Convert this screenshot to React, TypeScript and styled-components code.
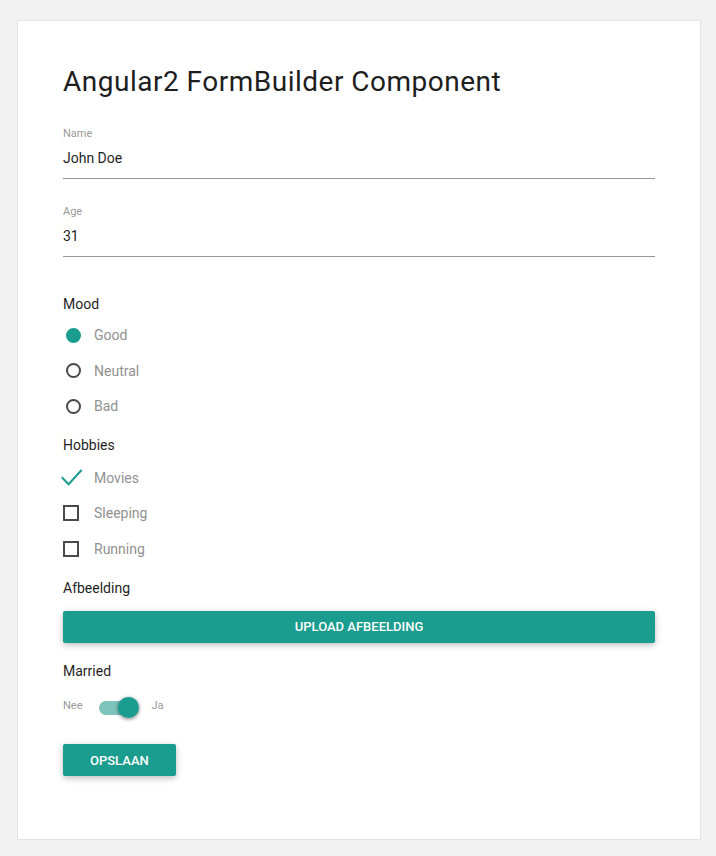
import React from "react";
import styled, { createGlobalStyle } from "styled-components";

const TEAL = "#1a9c8e";

const Global = createGlobalStyle`
  html, body { margin: 0; padding: 0; }
  body {
    background: #f2f2f2;
    font-family: Roboto, "Noto Sans", Arial, sans-serif;
    -webkit-font-smoothing: antialiased;
  }
  * { box-sizing: border-box; }
`;

const Page = styled.div`
  padding: 20px 15px 16px 17px;
`;

const Card = styled.div`
  background: #ffffff;
  border: 1px solid #e4e4e4;
  height: 820px;
  padding: 44px 45px 0 45px;
  display: flex;
  flex-direction: column;
`;

const Title = styled.h1`
  margin: 0;
  font-size: 28px;
  line-height: 34px;
  font-weight: 400;
  letter-spacing: 0.5px;
  color: #1e1e1e;
`;

const Field = styled.div<{ $mt: number }>`
  margin-top: ${(p) => p.$mt}px;
  border-bottom: 1px solid #979797;
  padding-bottom: 10px;
`;

const FieldLabel = styled.div`
  font-size: 11px;
  line-height: 14px;
  color: #9a9a9a;
`;

const FieldValue = styled.div`
  margin-top: 7px;
  font-size: 14px;
  line-height: 20px;
  color: #1f1f1f;
`;

const Section = styled.div<{ $mt: number }>`
  margin-top: ${(p) => p.$mt}px;
  display: flex;
  flex-direction: column;
`;

const SectionLabel = styled.div`
  font-size: 14px;
  line-height: 20px;
  color: #1f1f1f;
`;

const Options = styled.div<{ $mt: number }>`
  margin-top: ${(p) => p.$mt}px;
  display: flex;
  flex-direction: column;
`;

const Option = styled.div`
  height: 35.5px;
  display: flex;
  align-items: center;
`;

const IconSlot = styled.div`
  width: 31px;
  height: 20px;
  display: flex;
  align-items: center;
`;

const OptionText = styled.span`
  font-size: 14px;
  line-height: 20px;
  color: #919191;
`;

const Radio = styled.span<{ $checked?: boolean }>`
  width: 15px;
  height: 15px;
  margin-left: 2.5px;
  border-radius: 50%;
  border: 2px solid ${(p) => (p.$checked ? TEAL : "#4a4a4a")};
  background: ${(p) => (p.$checked ? TEAL : "transparent")};
`;

const Box = styled.span`
  width: 16px;
  height: 16px;
  border: 2px solid #4a4a4a;
`;

const CheckSvg = styled.svg`
  margin-left: -2px;
  width: 22px;
  height: 18px;
  overflow: visible;
`;

const RaisedButton = styled.button<{ $full?: boolean }>`
  height: 32px;
  border: none;
  border-radius: 2px;
  background: ${TEAL};
  color: #ffffff;
  font-family: Roboto, "Noto Sans", Arial, sans-serif;
  font-size: 13px;
  font-weight: 500;
  letter-spacing: 0;
  text-transform: uppercase;
  padding: 0 27px;
  width: ${(p) => (p.$full ? "100%" : "auto")};
  align-self: ${(p) => (p.$full ? "stretch" : "flex-start")};
  box-shadow: 0 2px 5px 0 rgba(0, 0, 0, 0.16), 0 2px 10px 0 rgba(0, 0, 0, 0.12);
  cursor: pointer;
`;

const SwitchRow = styled.div`
  margin-top: 16px;
  height: 22px;
  display: flex;
  align-items: center;
`;

const SwitchText = styled.span`
  font-size: 11px;
  line-height: 14px;
  padding-bottom: 5px;
  color: #999999;
`;

const Track = styled.span`
  position: relative;
  width: 36px;
  height: 14px;
  margin: 0 17px 0 16px;
  border-radius: 7px;
  background: #7ec4bc;
`;

const Thumb = styled.span`
  position: absolute;
  left: 19px;
  top: -4px;
  width: 21px;
  height: 21px;
  border-radius: 50%;
  background: ${TEAL};
  box-shadow: 0 1px 3px 1px rgba(0, 0, 0, 0.3);
`;

const moods = [
  { label: "Good", checked: true },
  { label: "Neutral", checked: false },
  { label: "Bad", checked: false },
];

const hobbies = [
  { label: "Movies", checked: true },
  { label: "Sleeping", checked: false },
  { label: "Running", checked: false },
];

export default function App() {
  return (
    <>
      <Global />
      <Page>
        <Card>
          <Title>Angular2 FormBuilder Component</Title>

          <Field $mt={28}>
            <FieldLabel>Name</FieldLabel>
            <FieldValue>John Doe</FieldValue>
          </Field>
          <Field $mt={26}>
            <FieldLabel>Age</FieldLabel>
            <FieldValue>31</FieldValue>
          </Field>

          <Section $mt={36.5}>
            <SectionLabel>Mood</SectionLabel>
            <Options $mt={4}>
              {moods.map((m) => (
                <Option key={m.label}>
                  <IconSlot>
                    <Radio $checked={m.checked} />
                  </IconSlot>
                  <OptionText>{m.label}</OptionText>
                </Option>
              ))}
            </Options>
          </Section>

          <Section $mt={11.2}>
            <SectionLabel>Hobbies</SectionLabel>
            <Options $mt={5}>
              {hobbies.map((h) => (
                <Option key={h.label}>
                  <IconSlot>
                    {h.checked ? (
                      <CheckSvg viewBox="0 0 22 18">
                        <polyline
                          points="0.8,8.2 7.6,15.2 20.6,1"
                          fill="none"
                          stroke={TEAL}
                          strokeWidth="2"
                        />
                      </CheckSvg>
                    ) : (
                      <Box />
                    )}
                  </IconSlot>
                  <OptionText>{h.label}</OptionText>
                </Option>
              ))}
            </Options>
          </Section>

          <Section $mt={11.2}>
            <SectionLabel>Afbeelding</SectionLabel>
            <Options $mt={13}>
              <RaisedButton $full>Upload Afbeelding</RaisedButton>
            </Options>
          </Section>

          <Section $mt={18.2}>
            <SectionLabel>Married</SectionLabel>
            <SwitchRow>
              <SwitchText>Nee</SwitchText>
              <Track>
                <Thumb />
              </Track>
              <SwitchText>Ja</SwitchText>
            </SwitchRow>
          </Section>

          <Section $mt={25}>
            <RaisedButton>Opslaan</RaisedButton>
          </Section>
        </Card>
      </Page>
    </>
  );
}
